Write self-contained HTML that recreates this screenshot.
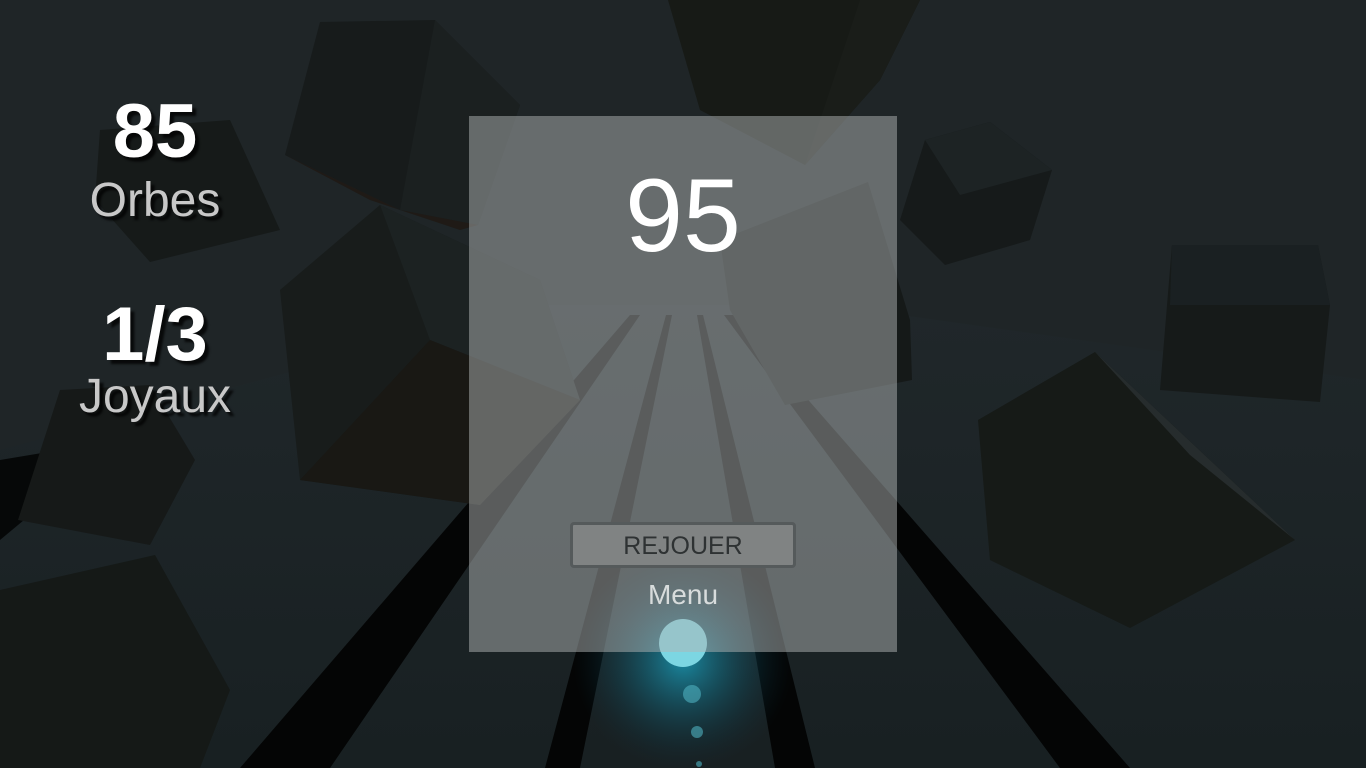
<!DOCTYPE html>
<html><head><meta charset="utf-8"><style>
html,body{margin:0;padding:0;width:1366px;height:768px;overflow:hidden;background:#1e2426;font-family:"Liberation Sans",sans-serif}
svg{position:absolute;left:0;top:0}
.t{position:absolute;text-align:center;width:320px;left:-5px;text-shadow:4px 4px 2px rgba(0,0,0,.75)}
.big{color:#fff;font-weight:bold;font-size:76px;line-height:76px}
.sm{color:#c8c8c8;font-size:48px;line-height:50px}
#panel{position:absolute;left:469px;top:116px;width:428px;height:536px;background:rgba(175,180,180,.5)}
#n{position:absolute;left:0;width:428px;top:48px;text-align:center;color:#fff;font-size:104px;line-height:104px}
#btn{position:absolute;left:101px;top:406px;width:220px;height:40px;border:3px solid #555a5b;border-radius:4px;background:#808383;color:#2e3233;font-size:25px;line-height:42px;text-align:center;box-sizing:content-box}
#menu{position:absolute;left:0;width:428px;top:463px;text-align:center;color:#d8dcdc;font-size:28px}
</style></head><body>
<svg width="1366" height="768" viewBox="0 0 1366 768">
<defs>
<radialGradient id="g" cx="683" cy="660" r="110" gradientUnits="userSpaceOnUse">
<stop offset="0" stop-color="#1aa3c0" stop-opacity=".8"/><stop offset="1" stop-color="#0a3040" stop-opacity="0"/></radialGradient>
<linearGradient id="fl" x1="0" y1="300" x2="0" y2="768" gradientUnits="userSpaceOnUse"><stop offset="0" stop-color="#20272a"/><stop offset="1" stop-color="#182022"/></linearGradient>
</defs>
<rect width="1366" height="768" fill="#1f2527"/>
<polygon points="0,450 540,305 830,305 1366,380 1366,768 0,768" fill="url(#fl)"/>
<polygon points="0,460 120,440 0,540" fill="#060808"/>
<polygon points="630,315 640,315 330,768 240,768" fill="#040505"/>
<polygon points="666,315 672,315 580,768 545,768" fill="#040505"/>
<polygon points="697,315 703,315 815,768 775,768" fill="#040505"/>
<polygon points="724,315 734,315 1130,768 1060,768" fill="#040505"/>
<rect x="520" y="540" width="330" height="228" fill="url(#g)"/>
<polygon points="320,22 435,20 520,105 478,225 400,210 285,155" fill="#171b1b"/>
<polygon points="435,20 520,105 478,225 400,210" fill="#1b2020"/>
<polygon points="285,155 400,210 478,225 460,230 370,200" fill="#1f1a16"/>
<polygon points="100,130 230,120 280,230 150,262 95,200" fill="#161a19"/>
<polygon points="668,0 920,0 880,80 805,165 700,110" fill="#171a16"/>
<polygon points="805,165 880,80 920,0 860,0" fill="#1a1d19"/>
<polygon points="925,140 990,122 1052,170 1030,240 945,265 900,220" fill="#161a1a"/>
<polygon points="925,140 990,122 1052,170 960,195" fill="#1d2324"/>
<polygon points="1172,245 1318,245 1330,305 1320,402 1160,390" fill="#161a19"/>
<polygon points="1172,245 1318,245 1330,305 1170,305" fill="#1a2022"/>
<polygon points="978,420 1095,352 1295,540 1130,628 990,560" fill="#161a17"/>
<polygon points="1095,352 1295,540 1190,455" fill="#262c2d"/>
<polygon points="280,290 380,205 540,280 580,400 480,505 300,480" fill="#181c1b"/>
<polygon points="380,205 540,280 580,400 430,340" fill="#1c2222"/>
<polygon points="300,480 430,340 580,400 480,505" fill="#191814"/>
<polygon points="720,240 868,182 910,320 912,380 785,405 730,310" fill="#151918"/>
<polygon points="18,520 60,390 150,385 195,460 150,545" fill="#161918"/>
<polygon points="0,590 155,555 230,690 200,768 0,768" fill="#151917"/>
<circle cx="683" cy="643" r="24" fill="#7cd6e2"/>
<circle cx="692" cy="694" r="9" fill="#4fb0c0" opacity=".6"/>
<circle cx="697" cy="732" r="6" fill="#4fb0c0" opacity=".6"/>
<circle cx="699" cy="764" r="3" fill="#4fb0c0" opacity=".6"/>
</svg>
<div class="t big" style="top:94px">85</div>
<div class="t sm" style="top:176px">Orbes</div>
<div class="t big" style="top:297px">1/3</div>
<div class="t sm" style="top:372px">Joyaux</div>
<div id="panel">
<div id="n">95</div>
<div id="btn">REJOUER</div>
<div id="menu">Menu</div>
</div>
</body></html>
